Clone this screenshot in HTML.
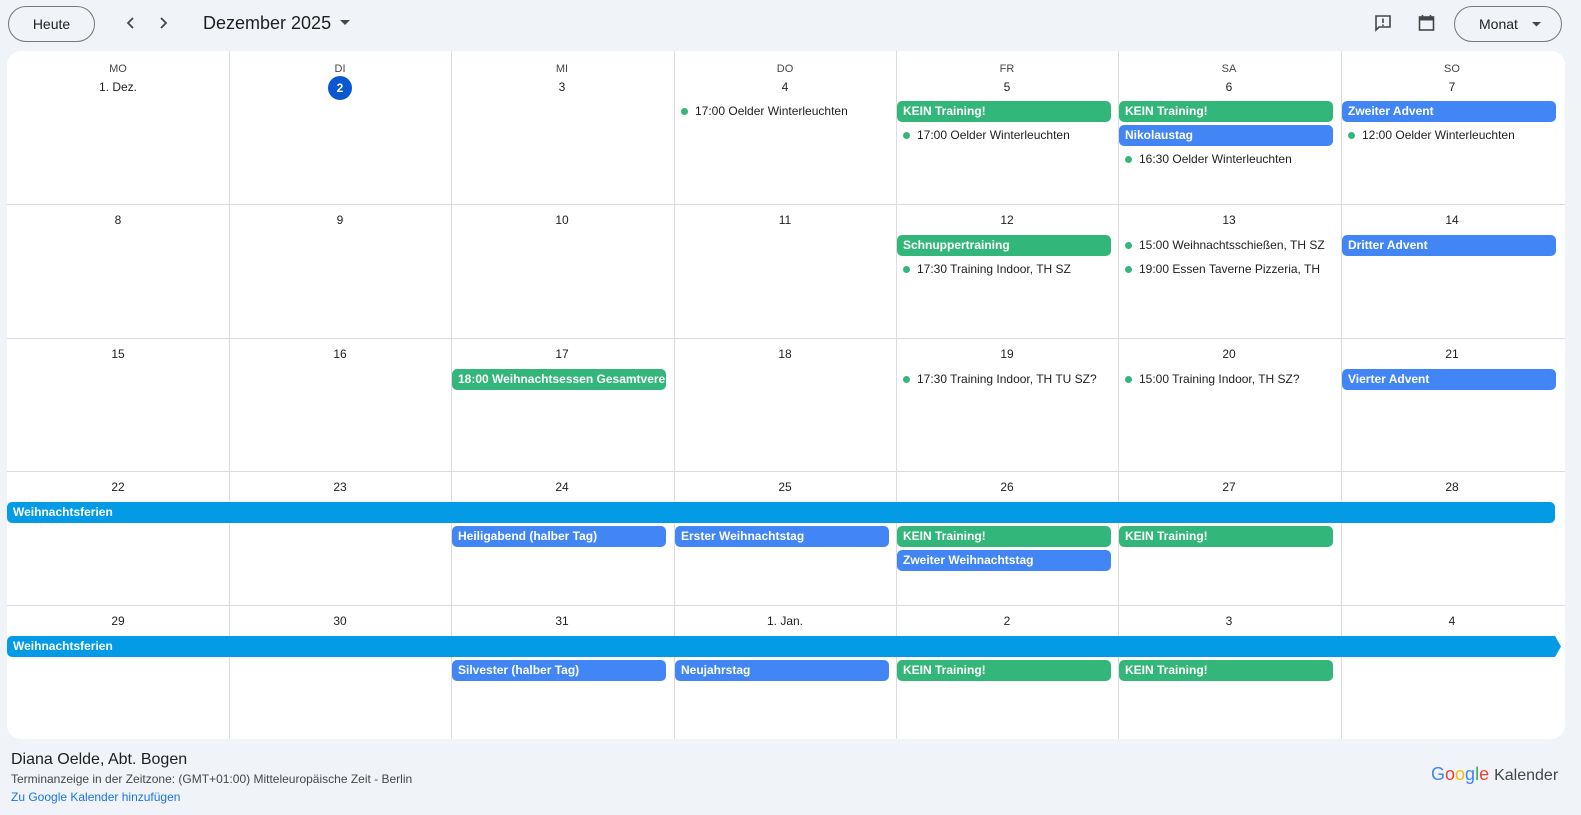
<!DOCTYPE html>
<html><head><meta charset="utf-8"><style>
*{margin:0;padding:0;box-sizing:border-box}
body{width:1581px;height:815px;background:#f0f4f9;font-family:"Liberation Sans",Arial,sans-serif;color:#1f1f1f;position:relative;overflow:hidden}
.a{position:absolute}
.btn{position:absolute;border:1px solid #747775;border-radius:18px;height:36px;font-size:14px;font-weight:500;display:flex;align-items:center;justify-content:center}
.card{position:absolute;left:7px;top:51px;width:1558px;height:688px;background:#fff;border-radius:14px;overflow:hidden}
.vl{position:absolute;top:0;width:1px;height:688px;background:#dadce0}
.hl{position:absolute;left:0;width:1558px;height:1px;background:#dadce0}
.dn{position:absolute;width:222px;text-align:center;font-size:11px;color:#444746}
.d{position:absolute;width:222px;text-align:center;font-size:12px;font-weight:500;color:#1f1f1f}
.c{position:absolute;height:21px;border-radius:5px;color:#fff;font-size:12px;font-weight:bold;line-height:21px;padding-left:6px;white-space:nowrap;overflow:hidden;width:214px}
.g{background:#33b679}.b{background:#4285f4}.cy{background:#039be5}
.e{position:absolute;height:21px;font-size:12px;line-height:21px;white-space:nowrap;padding-left:21px;color:#1f1f1f}
.e:before{content:"";position:absolute;left:7px;top:7px;width:7px;height:7px;border-radius:50%;background:#33b679}
</style></head><body>
<div class="btn" style="left:8px;top:6px;width:87px">Heute</div>
<svg class="a" style="left:123px;top:15px" width="16" height="16" viewBox="0 0 16 16"><path d="M10 3 5 8l5 5" fill="none" stroke="#444746" stroke-width="1.8"/></svg>
<svg class="a" style="left:155px;top:15px" width="16" height="16" viewBox="0 0 16 16"><path d="M6 3l5 5-5 5" fill="none" stroke="#444746" stroke-width="1.8"/></svg>
<div class="a" style="left:203px;top:13px;font-size:18px;color:#1f1f1f">Dezember 2025</div>
<svg class="a" style="left:340px;top:20px" width="10" height="6"><path d="M0 0h10L5 5z" fill="#444746"/></svg>
<svg class="a" style="left:1374px;top:14px" width="18" height="18" viewBox="0 0 18 18"><path d="M2 2h14v11H5l-3 3z" fill="none" stroke="#444746" stroke-width="1.6"/><path d="M9 4.5v4.5M9 10.5v1.5" stroke="#444746" stroke-width="1.6"/></svg>
<svg class="a" style="left:1418px;top:14px" width="17" height="18" viewBox="0 0 17 18"><rect x="1.5" y="3" width="14" height="13" fill="none" stroke="#444746" stroke-width="1.6"/><rect x="1.5" y="3" width="14" height="3.5" fill="#444746"/><path d="M4.5 1v3M12.5 1v3" stroke="#444746" stroke-width="1.6"/></svg>
<div class="btn" style="left:1454px;top:6px;width:108px;justify-content:flex-start;padding-left:24px">Monat<svg style="margin-left:14px" width="9" height="5"><path d="M0 0h9L4.5 4.5z" fill="#444746"/></svg></div>

<div class="card">
<div class="vl" style="left:222px"></div><div class="vl" style="left:444px"></div><div class="vl" style="left:667px"></div><div class="vl" style="left:889px"></div><div class="vl" style="left:1111px"></div><div class="vl" style="left:1334px"></div>
<div class="hl" style="top:153px"></div><div class="hl" style="top:287px"></div><div class="hl" style="top:420px"></div><div class="hl" style="top:554px"></div>
</div>
<div class="dn" style="left:7px;top:63px">MO</div><div class="dn" style="left:229px;top:63px">DI</div><div class="dn" style="left:451px;top:63px">MI</div><div class="dn" style="left:674px;top:63px">DO</div><div class="dn" style="left:896px;top:63px">FR</div><div class="dn" style="left:1118px;top:63px">SA</div><div class="dn" style="left:1341px;top:63px">SO</div>
<div class="d" style="left:7px;top:80px">1. Dez.</div>
<div class="a" style="left:328px;top:76px;width:24px;height:24px;border-radius:50%;background:#0b57d0;color:#fff;font-size:12px;font-weight:bold;text-align:center;line-height:24px">2</div>
<div class="d" style="left:451px;top:80px">3</div><div class="d" style="left:674px;top:80px">4</div><div class="d" style="left:896px;top:80px">5</div><div class="d" style="left:1118px;top:80px">6</div><div class="d" style="left:1341px;top:80px">7</div>
<div class="d" style="left:7px;top:213px">8</div><div class="d" style="left:229px;top:213px">9</div><div class="d" style="left:451px;top:213px">10</div><div class="d" style="left:674px;top:213px">11</div><div class="d" style="left:896px;top:213px">12</div><div class="d" style="left:1118px;top:213px">13</div><div class="d" style="left:1341px;top:213px">14</div>
<div class="d" style="left:7px;top:347px">15</div><div class="d" style="left:229px;top:347px">16</div><div class="d" style="left:451px;top:347px">17</div><div class="d" style="left:674px;top:347px">18</div><div class="d" style="left:896px;top:347px">19</div><div class="d" style="left:1118px;top:347px">20</div><div class="d" style="left:1341px;top:347px">21</div>
<div class="d" style="left:7px;top:480px">22</div><div class="d" style="left:229px;top:480px">23</div><div class="d" style="left:451px;top:480px">24</div><div class="d" style="left:674px;top:480px">25</div><div class="d" style="left:896px;top:480px">26</div><div class="d" style="left:1118px;top:480px">27</div><div class="d" style="left:1341px;top:480px">28</div>
<div class="d" style="left:7px;top:614px">29</div><div class="d" style="left:229px;top:614px">30</div><div class="d" style="left:451px;top:614px">31</div><div class="d" style="left:674px;top:614px">1. Jan.</div><div class="d" style="left:896px;top:614px">2</div><div class="d" style="left:1118px;top:614px">3</div><div class="d" style="left:1341px;top:614px">4</div>
<div class="e" style="left:674px;top:101px">17:00 Oelder Winterleuchten</div>
<div class="c g" style="left:897px;top:101px">KEIN Training!</div>
<div class="e" style="left:896px;top:125px">17:00 Oelder Winterleuchten</div>
<div class="c g" style="left:1119px;top:101px">KEIN Training!</div>
<div class="c b" style="left:1119px;top:125px">Nikolaustag</div>
<div class="e" style="left:1118px;top:149px">16:30 Oelder Winterleuchten</div>
<div class="c b" style="left:1342px;top:101px">Zweiter Advent</div>
<div class="e" style="left:1341px;top:125px">12:00 Oelder Winterleuchten</div>
<div class="c g" style="left:897px;top:235px">Schnuppertraining</div>
<div class="e" style="left:896px;top:259px">17:30 Training Indoor, TH SZ</div>
<div class="e" style="left:1118px;top:235px">15:00 Weihnachtsschießen, TH SZ</div>
<div class="e" style="left:1118px;top:259px">19:00 Essen Taverne Pizzeria, TH</div>
<div class="c b" style="left:1342px;top:235px">Dritter Advent</div>
<div class="c g" style="left:452px;top:369px">18:00 Weihnachtsessen Gesamtverein</div>
<div class="e" style="left:896px;top:369px">17:30 Training Indoor, TH TU SZ?</div>
<div class="e" style="left:1118px;top:369px">15:00 Training Indoor, TH SZ?</div>
<div class="c b" style="left:1342px;top:369px">Vierter Advent</div>
<div class="c cy" style="left:7px;top:502px;width:1548px">Weihnachtsferien</div>
<div class="c b" style="left:452px;top:526px">Heiligabend (halber Tag)</div>
<div class="c b" style="left:675px;top:526px">Erster Weihnachtstag</div>
<div class="c g" style="left:897px;top:526px">KEIN Training!</div>
<div class="c b" style="left:897px;top:550px">Zweiter Weihnachtstag</div>
<div class="c g" style="left:1119px;top:526px">KEIN Training!</div>
<div class="c cy" style="left:7px;top:636px;width:1548px;border-radius:5px 0 0 5px">Weihnachtsferien</div>
<svg class="a" style="left:1554px;top:636px" width="7" height="21"><path d="M0 0h1l6 10.5L1 21H0z" fill="#039be5"/></svg>
<div class="c b" style="left:452px;top:660px">Silvester (halber Tag)</div>
<div class="c b" style="left:675px;top:660px">Neujahrstag</div>
<div class="c g" style="left:897px;top:660px">KEIN Training!</div>
<div class="c g" style="left:1119px;top:660px">KEIN Training!</div>
<div class="a" style="left:11px;top:751px;font-size:16px;color:#1f1f1f">Diana Oelde, Abt. Bogen</div>
<div class="a" style="left:11px;top:772px;font-size:12px;color:#444746">Terminanzeige in der Zeitzone: (GMT+01:00) Mitteleuropäische Zeit - Berlin</div>
<div class="a" style="left:11px;top:790px;font-size:12px;color:#1a73e8">Zu Google Kalender hinzufügen</div>
<div class="a" style="left:1431px;top:764px;font-size:18px;white-space:nowrap"><span style="color:#4285f4">G</span><span style="color:#ea4335">o</span><span style="color:#fbbc05">o</span><span style="color:#4285f4">g</span><span style="color:#34a853">l</span><span style="color:#ea4335">e</span> <span style="color:#444746;font-size:16px">Kalender</span></div>
</body></html>
